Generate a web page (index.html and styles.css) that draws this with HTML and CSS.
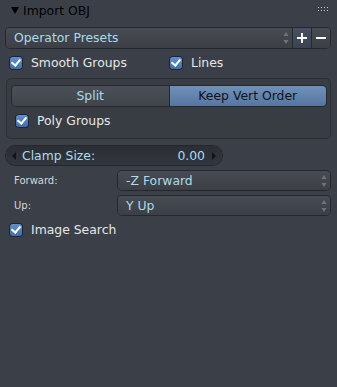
FILE: index.html
```html
<!DOCTYPE html>
<html lang="en">

<head>
  <meta charset="UTF-8">
  <title>Import OBJ</title>
  <link rel="stylesheet" href="styles.css">
</head>

<body>
  <header class="panel-head">
    <svg class="tri" viewBox="0 0 8 7"><path d="M0 0 H8 L4 7 Z"/></svg>
    <span class="title">Import OBJ</span>
    <span class="grip"><i></i><i></i><i></i><i></i><i></i><i></i><i></i><i></i></span>
  </header>

  <div class="presets">
    <div class="menu grow">
      <span>Operator Presets</span>
      <svg class="updown" viewBox="0 0 6 14"><path d="M3 1 L5.5 5 H0.5 Z M3 13 L5.5 9 H0.5 Z"/></svg>
    </div>
    <button class="icon-btn">
      <svg viewBox="0 0 12 12"><path d="M6 1 V11 M1 6 H11" stroke="#fff" stroke-width="2"/></svg>
    </button>
    <button class="icon-btn last">
      <svg viewBox="0 0 12 12"><path d="M1 6 H11" stroke="#fff" stroke-width="2"/></svg>
    </button>
  </div>

  <div class="row split-row">
    <label class="check"><span class="box-check"></span>Smooth Groups</label>
    <label class="check"><span class="box-check"></span>Lines</label>
  </div>

  <section class="group">
    <div class="toggle">
      <span class="opt">Split</span>
      <span class="opt on">Keep Vert Order</span>
    </div>
    <label class="check"><span class="box-check"></span>Poly Groups</label>
  </section>

  <div class="slider">
    <span class="arrow left"></span>
    <span class="name">Clamp Size:</span>
    <span class="value">0.00</span>
    <span class="arrow right"></span>
  </div>

  <div class="prop">
    <span class="prop-label">Forward:</span>
    <div class="menu">
      <span>-Z Forward</span>
      <svg class="updown" viewBox="0 0 6 14"><path d="M3 1 L5.5 5 H0.5 Z M3 13 L5.5 9 H0.5 Z"/></svg>
    </div>
  </div>

  <div class="prop">
    <span class="prop-label">Up:</span>
    <div class="menu">
      <span>Y Up</span>
      <svg class="updown" viewBox="0 0 6 14"><path d="M3 1 L5.5 5 H0.5 Z M3 13 L5.5 9 H0.5 Z"/></svg>
    </div>
  </div>

  <div class="row">
    <label class="check"><span class="box-check"></span>Image Search</label>
  </div>
</body>

</html>
```

FILE: styles.css
```css
:root {
  --bg: #3b4048;
  --cyan: #a9dcea;
  --text: #e6e6e6;
  --edge: #25282d;
}

body {
  margin: 0;
  padding: 0 7px 0 6px;
  background: var(--bg);
  font-family: "DejaVu Sans", sans-serif;
  font-size: 12.4px;
  line-height: 14px;
  color: var(--text);
  height: 387px;
  box-sizing: border-box;
}

.panel-head {
  position: relative;
  display: flex;
  align-items: center;
  height: 21px;
  padding-left: 5px;
  color: #000;
}

.tri {
  width: 8px;
  height: 7px;
  margin-right: 4px;
  fill: #000;
}

.title {
  color: #000;
}

.grip {
  position: absolute;
  right: 2px;
  top: 7px;
  display: grid;
  grid-template-columns: repeat(4, 1px);
  gap: 2px 2px;
}

.grip i {
  width: 1px;
  height: 1px;
  background: #c8ccd2;
}

.presets {
  display: flex;
  height: 20px;
  margin-top: 7px;
  border-radius: 4px;
  box-shadow: 0 0 0 1px var(--edge);
  background: linear-gradient(#474b53, #3c3f46);
}

.menu {
  display: flex;
  align-items: center;
  justify-content: space-between;
  padding: 0 3px 0 8px;
  color: var(--cyan);
  border-radius: 4px;
  background: linear-gradient(#474b53, #3c3f46);
  box-shadow: 0 0 0 1px var(--edge);
}

.presets .menu {
  flex: 1;
  box-shadow: none;
  border-radius: 4px 0 0 4px;
}

.updown {
  width: 6px;
  height: 14px;
  fill: #6f747c;
}

.icon-btn {
  width: 19px;
  padding: 0;
  border: none;
  border-left: 1px solid var(--edge);
  background: linear-gradient(#475062, #3a4252);
  display: grid;
  place-items: center;
}

.icon-btn.last {
  border-radius: 0 4px 4px 0;
  background: linear-gradient(#474b53, #3c3f46);
}

.icon-btn svg {
  width: 12px;
  height: 12px;
}

.row {
  display: flex;
  align-items: center;
  height: 20px;
  margin-top: 5px;
  padding-left: 4px;
}

.split-row .check {
  flex: 1;
}

.check {
  display: flex;
  align-items: center;
  gap: 9px;
}

.box-check {
  position: relative;
  width: 12px;
  height: 12px;
  border-radius: 3px;
  background: linear-gradient(#5f8fd3, #3f6db0);
  box-shadow: 0 0 0 1px #22262c;
}

.box-check::after {
  content: "";
  position: absolute;
  left: 3px;
  top: 0px;
  width: 4px;
  height: 7px;
  border: solid #fff;
  border-width: 0 2px 2px 0;
  transform: rotate(40deg);
}

.group {
  margin-top: 5px;
  margin-right: -1px;
  padding: 7px 4px 7px 5px;
  border: 1px solid #2c3036;
  border-radius: 5px;
  background: #383c43;
}

.toggle {
  display: flex;
  height: 20px;
  border-radius: 4px;
  box-shadow: 0 0 0 1px var(--edge);
  overflow: hidden;
}

.opt {
  flex: 1;
  display: grid;
  place-items: center;
  color: var(--cyan);
  background: linear-gradient(#4b4f57, #41444b);
}

.opt.on {
  color: #101318;
  border-left: 1px solid var(--edge);
  background: linear-gradient(#6f91b9, #5676a0);
}

.group .check {
  height: 20px;
  margin-top: 5px;
  padding-left: 4px;
}

.slider {
  display: flex;
  align-items: center;
  width: 216px;
  height: 19px;
  margin-top: 7px;
  padding: 0 6px;
  box-sizing: border-box;
  border-radius: 10px;
  color: var(--cyan);
  background: linear-gradient(#2b2f35, #32363d);
  box-shadow: 0 0 0 1px #24272c;
}

.slider .name {
  flex: 1;
  margin-left: 6px;
}

.slider .value {
  margin-right: 7px;
}

.arrow {
  width: 0;
  height: 0;
  border-top: 4px solid transparent;
  border-bottom: 4px solid transparent;
}

.arrow.left {
  border-right: 4px solid #101216;
}

.arrow.right {
  border-left: 4px solid #101216;
}

.prop {
  display: flex;
  align-items: center;
  height: 19px;
  margin-top: 6px;
}

.prop-label {
  box-sizing: border-box;
  width: 112px;
  padding-left: 8px;
  font-size: 10px;
  color: #d4d6d9;
}

.prop .menu {
  flex: 1;
  height: 100%;
}
```
